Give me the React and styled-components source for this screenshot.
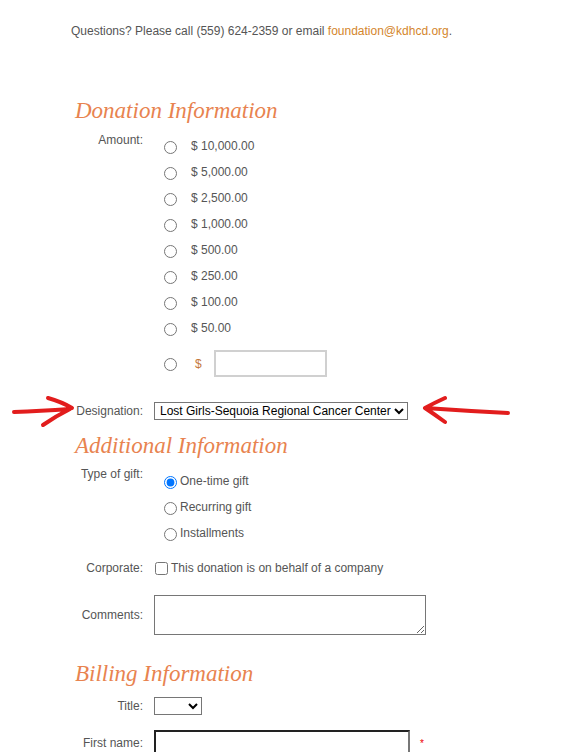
import React from 'react';
import styled, { createGlobalStyle } from 'styled-components';

const GlobalStyle = createGlobalStyle`
    body {
        margin: 0;
        background: #fff;
        font-family: "Liberation Sans", Arial, sans-serif;
        font-size: 12px;
        color: #555;
    }
`;

const Page = styled.div`
    width: 578px;
    padding-bottom: 40px;
`;

const Intro = styled.p`
    margin: 0;
    padding: 23px 0 0 71px;
    line-height: 16px;
`;

const MailLink = styled.a`
    color: #d4862c;
    text-decoration: none;
`;

const Heading = styled.h2`
    margin: ${(props) => props.top}px 0 0 75px;
    font-family: "Liberation Serif", Georgia, serif;
    font-style: italic;
    font-weight: normal;
    font-size: 23px;
    line-height: 28px;
    color: #e8834f;
`;

const Row = styled.div`
    position: relative;
    display: grid;
    grid-template-columns: 143px 1fr;
    column-gap: 11px;
    align-items: ${(props) => (props.center ? 'center' : 'start')};
    margin-top: ${(props) => props.top || 0}px;
`;

const Label = styled.div`
    text-align: right;
    line-height: 16px;
`;

const OptionList = styled.div`
    display: flex;
    flex-direction: column;
    padding-top: ${(props) => props.offset || 0}px;
    padding-left: 10px;
`;

const Option = styled.label`
    display: flex;
    align-items: center;
    height: 26px;
    gap: ${(props) => props.gap}px;
    line-height: 16px;
`;

const Radio = styled.input.attrs({ type: 'radio' })`
    margin: 0;
    width: 13px;
    height: 13px;
    position: relative;
    top: 1px;
`;

const Amount = styled.span`
    color: #555;
`;

const CustomRow = styled.div`
    display: flex;
    align-items: center;
    margin-top: 9px;
`;

const Dollar = styled.span`
    color: #c4783c;
    margin: 0 12px 0 18px;
`;

const AmountInput = styled.input`
    box-sizing: border-box;
    width: 113px;
    height: 27px;
    border: 2px solid #d0d0d0;
    outline: none;
`;

const Select = styled.select`
    box-sizing: border-box;
    height: 18px;
    width: ${(props) => props.w}px;
    font-family: "Liberation Sans", Arial, sans-serif;
    font-size: 12px;
    color: #000;
    border: 1px solid #767676;
    border-radius: 0;
    background: #fff;
    padding: 0 0 0 1px;
`;

const Check = styled.label`
    display: flex;
    align-items: center;
    gap: 3px;
    line-height: 16px;
`;

const CheckBox = styled.input.attrs({ type: 'checkbox' })`
    margin: 0 0 0 1px;
    width: 13px;
    height: 13px;
`;

const Comments = styled.textarea`
    box-sizing: border-box;
    width: 272px;
    height: 40px;
    border: 1px solid #767676;
    border-radius: 0;
    margin: 0;
    display: block;
`;

const FieldWrap = styled.div`
    display: flex;
    align-items: center;
`;

const NameInput = styled.input`
    box-sizing: border-box;
    width: 256px;
    height: 26px;
    border-style: solid;
    border-width: 2px;
    border-color: #222 #777 #777 #222;
    outline: none;
`;

const Required = styled.span`
    color: #e00;
    font-size: 10px;
    margin-left: 10px;
`;

const Arrow = styled.svg`
    position: absolute;
    pointer-events: none;
    overflow: visible;
`;

const amounts = ['10,000.00', '5,000.00', '2,500.00', '1,000.00', '500.00', '250.00', '100.00', '50.00'];

const App = () => {
    return (
        <Page>
            <GlobalStyle />
            <Intro>
                Questions? Please call (559) 624-2359 or email <MailLink href="#">foundation@kdhcd.org</MailLink>.
            </Intro>

            <Heading top={58}>Donation Information</Heading>
            <Row top={7}>
                <Label>Amount:</Label>
                <div>
                    <OptionList offset={1}>
                        {amounts.map((a) => (
                            <Option key={a} gap={14}>
                                <Radio name="amount" />
                                <Amount>$ {a}</Amount>
                            </Option>
                        ))}
                    </OptionList>
                    <CustomRow>
                        <OptionList>
                            <Radio name="amount" />
                        </OptionList>
                        <Dollar>$</Dollar>
                        <AmountInput />
                    </CustomRow>
                </div>
            </Row>

            <Row top={25} center>
                <Label>Designation:</Label>
                <div>
                    <Select w={254} defaultValue="lg">
                        <option value="lg">Lost Girls-Sequoia Regional Cancer Center</option>
                    </Select>
                </div>
                <Arrow style={{ left: 10, top: -8 }} width="66" height="34">
                    <path d="M4 18 Q30 17 60 15 M38 4 Q52 8 62 14 M33 31 Q46 22 60 15" fill="none" stroke="#e21d1d" strokeWidth="4" strokeLinecap="round" />
                </Arrow>
                <Arrow style={{ left: 418, top: -10 }} width="96" height="36">
                    <path d="M7 16 Q50 19 90 21 M27 6 Q16 11 7 16 M27 30 Q16 22 7 16" fill="none" stroke="#e21d1d" strokeWidth="4" strokeLinecap="round" />
                </Arrow>
            </Row>

            <Heading top={12}>Additional Information</Heading>
            <Row top={6}>
                <Label>Type of gift:</Label>
                <OptionList offset={2}>
                    <Option gap={3}>
                        <Radio name="gift" defaultChecked />
                        One-time gift
                    </Option>
                    <Option gap={3}>
                        <Radio name="gift" />
                        Recurring gift
                    </Option>
                    <Option gap={3}>
                        <Radio name="gift" />
                        Installments
                    </Option>
                </OptionList>
            </Row>

            <Row top={14} center>
                <Label>Corporate:</Label>
                <Check>
                    <CheckBox />
                    This donation is on behalf of a company
                </Check>
            </Row>

            <Row top={19} center>
                <Label>Comments:</Label>
                <div>
                    <Comments />
                </div>
            </Row>

            <Heading top={25}>Billing Information</Heading>
            <Row top={9} center>
                <Label>Title:</Label>
                <div>
                    <Select w={48} defaultValue="">
                        <option value=""></option>
                    </Select>
                </div>
            </Row>

            <Row top={15} center>
                <Label>First name:</Label>
                <FieldWrap>
                    <NameInput />
                    <Required>*</Required>
                </FieldWrap>
            </Row>
        </Page>
    );
};

export default App;
